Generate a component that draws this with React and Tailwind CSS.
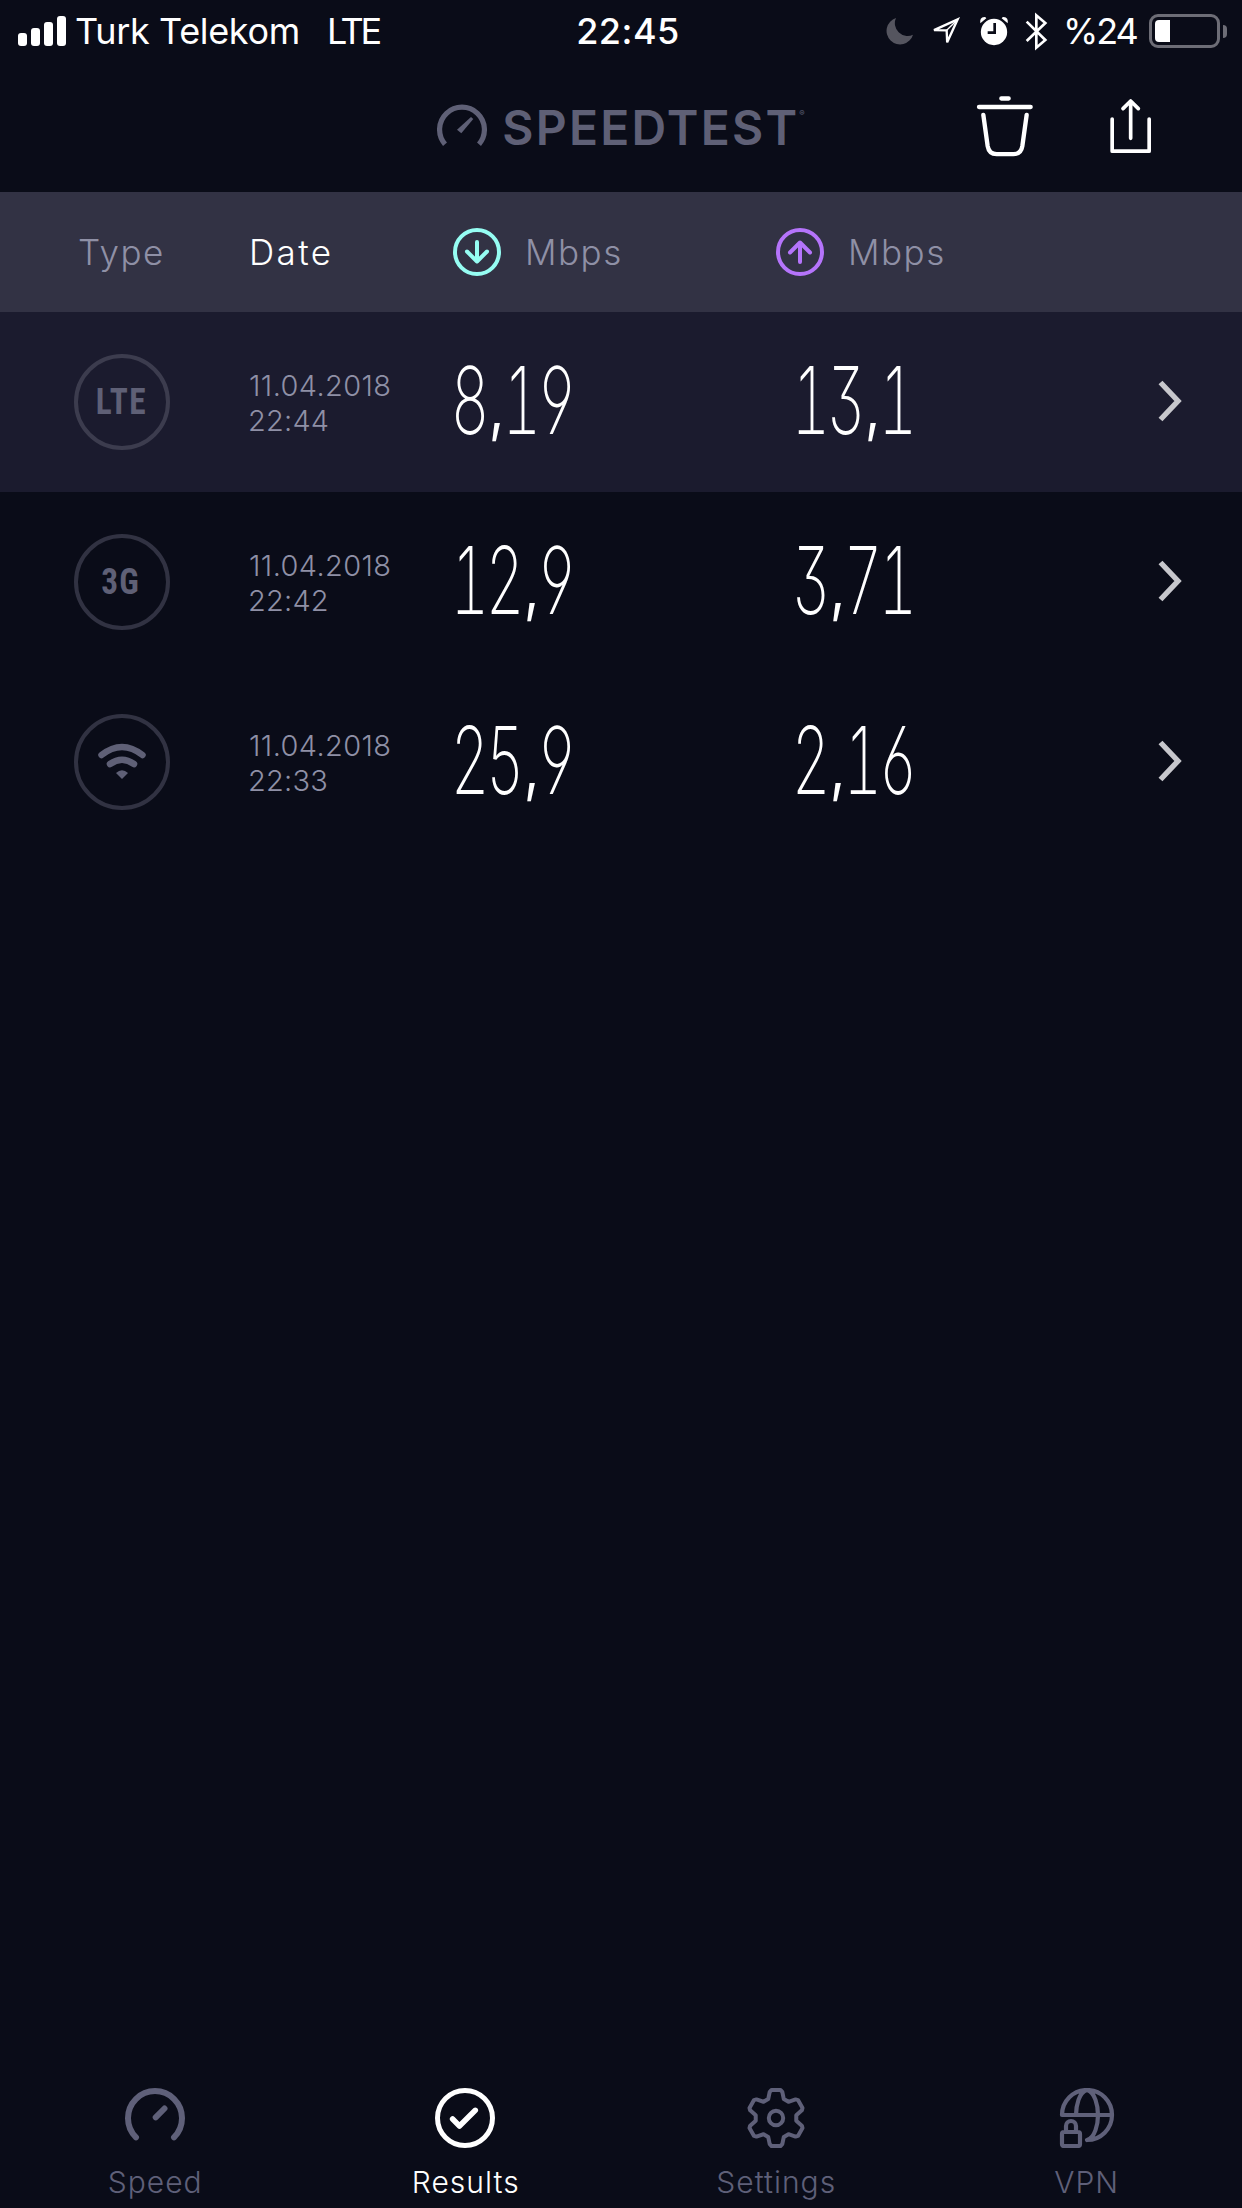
const SignalBars = () => (
  <div className="flex h-[30px] items-end gap-1">
    <span className="h-[13px] w-[9px] rounded-[3px] bg-white" />
    <span className="h-[18px] w-[9px] rounded-[3px] bg-white" />
    <span className="h-6 w-[9px] rounded-[3px] bg-white" />
    <span className="h-[30px] w-[9px] rounded-[3px] bg-white" />
  </div>
);

function StatusBar() {
  return (
    <div className="grid h-[62px] grid-cols-[1fr_auto_1fr] items-center pl-[18px] text-[36px] leading-[62px]">
      <div className="flex items-center">
        <SignalBars />
        <span className="ml-[9px] tracking-[-0.35px]">Turk Telekom</span>
        <span className="ml-[27px] tracking-[-3.2px]">LTE</span>
      </div>
      <span className="font-medium tracking-[0.5px] -translate-x-[2px]">22:45</span>
      <div className="flex items-center justify-end pr-[15px]">
        <svg viewBox="42 45 87 87" className="h-[29px] w-[29px]" fill="#55555f">
          <path d="M75 48 A40.5 40.5 0 1 0 126 98 A38 38 0 0 1 75 48Z" />
        </svg>
        <svg viewBox="180 45 93 93" className="ml-[16px] h-[31px] w-[31px]" fill="none" stroke="#fff" strokeWidth="7">
          <path d="M192 87.500 L263 55 L231.500 124 L230 88Z" />
          <path d="M230 88 L256 62" strokeWidth="4" />
        </svg>
        <svg viewBox="327 45 90 90" className="ml-[18px] h-[30px] w-[30px]" fill="#fff">
          <circle cx="372" cy="93" r="39.500" />
          <path d="M331 67 Q328 49 343 48 Q347 48 349 52Z M413 67 Q416 49 401 48 Q397 48 395 52Z" />
          <path d="M374 66 V95 H353" fill="none" stroke="#0a0c18" strokeWidth="8" />
        </svg>
        <svg viewBox="465 33 69 117" className="ml-[16px] h-[39px] w-[23px]" fill="none" stroke="#fff" strokeWidth="8">
          <path d="M470 62 L526 117 L499 140 V43 L526 66 L470 120" />
        </svg>
        <span className="ml-[15px] w-[86px] whitespace-nowrap tracking-[-2.1px]">%24</span>
        <div className="h-[34px] w-[71px] rounded-[9px] border-[3px] border-[#6d6d76] p-[3px]">
          <div className="h-full w-[15px] rounded-l-[4px] bg-white" />
        </div>
        <div className="ml-[3px] h-[13px] w-1 rounded-r-full bg-[#6d6d76]" />
      </div>
    </div>
  );
}

function NavBar() {
  return (
    <div className="grid h-[130px] grid-cols-[1fr_auto_1fr] items-center">
      <div />
      <div className="flex items-center text-[#5f6076]">
        <svg viewBox="0 0 50 43" className="mt-[-3px] h-[43px] w-[50px]" fill="none" stroke="currentColor" strokeWidth="5.200">
          <path d="M8 40.200 A22.400 22.400 0 1 1 42 40.200" />
          <path d="M20 25.700 L24.300 29.300 L36.300 15 L34 13Z" fill="currentColor" stroke="none" />
        </svg>
        <span className="ml-[15px] mt-[2px] text-[48px] font-semibold leading-[60px] tracking-[2.200px]">SPEEDTEST</span>
        <span className="mt-[-28px] text-[8px] leading-[8px]">®</span>
      </div>
      <div className="flex items-center justify-end gap-[75px] pr-[89px]">
        <svg viewBox="108 44 174 188" className="-mt-[2px] h-[63px] w-[58px]" fill="none" stroke="#fff" strokeWidth="13" strokeLinecap="round" strokeLinejoin="round">
          <path d="M184 54 H206 M117 79.500 H272 M130 103 L143 197 Q147 221 170 221 H220 Q243 221 247 197 L260 103" />
        </svg>
        <svg viewBox="508 54 132 168" className="-mt-[2px] h-[56px] w-[44px]" fill="none" stroke="#fff" strokeWidth="11" strokeLinecap="round" strokeLinejoin="round">
          <path d="M517.500 117 V213.500 H628.500 V117 M573 175 V63 M550 86 L573 63 L596 86" />
        </svg>
      </div>
    </div>
  );
}

const ArrowCircle = ({ up, color }) => (
  <svg viewBox="0 0 48 48" className="h-12 w-12" fill="none" stroke={color} strokeWidth="4" strokeLinecap="round" strokeLinejoin="round">
    <circle cx="24" cy="24" r="22" />
    <path d={up ? 'M24 34 V14.500 M14 24.500 L24 14.500 L34 24.500' : 'M24 14 V33.500 M14 23.500 L24 33.500 L34 23.500'} />
  </svg>
);

function HeaderRow() {
  return (
    <div className="grid h-[120px] grid-cols-[176px_203px_323px_1fr] items-center bg-[#323244] pl-[74px] text-[35px] font-light text-[#8f90a6]">
      <span className="pl-[4px] tracking-[1.500px]">Type</span>
      <span className="-ml-[1px] tracking-[2.400px] text-white">Date</span>
      <div className="flex items-center gap-[24px]">
        <ArrowCircle color="#96fdf3" />
        <span className="tracking-[1.500px]">Mbps</span>
      </div>
      <div className="flex items-center gap-[24px]">
        <ArrowCircle up color="#b574fb" />
        <span className="tracking-[1.500px]">Mbps</span>
      </div>
    </div>
  );
}

const Speed = ({ value }) => (
  <div className="flex pt-[8px] text-[93.500px] font-extralight leading-[100px] [font-feature-settings:'tnum','ss01']">
    {value.split('').map((ch, i) =>
      ch === ',' ? (
        <span key={i} className="flex w-[17px] justify-center font-normal">
          <span className="scale-x-[0.8] text-[66px] leading-[113px] [font-feature-settings:normal]">{ch}</span>
        </span>
      ) : (
        <span key={i} className="flex h-[100px] w-[34.800px] justify-center">
          <span className="scale-x-[0.64]">{ch}</span>
        </span>
      ),
    )}
  </div>
);

const WifiGlyph = () => (
  <svg viewBox="0 0 96 96" className="h-24 w-24 shrink-0" fill="none" stroke="#5f6076" strokeWidth="6.500" strokeLinecap="round">
    <path d="M27.500 41 Q48 25 68.500 41 M36 50 Q48 41.500 60 50" />
    <path d="M42 59 Q48 53.500 54 59 L48 65Z" fill="#5f6076" stroke="none" />
  </svg>
);

function ResultRow({ type, date, time, down, up, selected }) {
  return (
    <div className={`grid h-[180px] grid-cols-[175px_204px_341px_1fr_auto] items-center pl-[74px] pr-[60px] ${selected ? 'bg-[#1b1b2e]' : ''}`}>
      <div className={`-ml-[0.5px] flex h-24 w-24 items-center justify-center rounded-full border-4 ${selected ? 'border-[#3c3c4e]' : 'border-[#313242]'}`}>
        {type === 'wifi' ? (
          <WifiGlyph />
        ) : (
          <span className="-ml-px scale-x-[0.9] font-['Roboto'] text-[37px] font-bold tracking-[1.500px] text-[#5f6076] [font-stretch:75%]">{type}</span>
        )}
      </div>
      <div className="pt-[2px] text-[29px] font-light leading-[35px] text-[#8f90a6]">
        <div className="tracking-[0.400px]">{date}</div>
        <div className="-ml-[1px] tracking-[0.200px]">{time}</div>
      </div>
      <Speed value={down} />
      <Speed value={up} />
      <svg viewBox="0 0 24 42" className="-mt-[2px] h-[42px] w-6" fill="none" stroke="#c7c7cc" strokeWidth="5.400">
        <path d="M2.500 2.500 L20 21 L2.500 39.500" />
      </svg>
    </div>
  );
}

const TOOTH = [[-7.8, -18.9], [-6.3, -26.2], [-4.5, -28], [4.5, -28], [6.3, -26.2], [7.8, -18.9]];
const GEAR = [0, 60, 120, 180, 240, 300]
  .flatMap((deg) => {
    const a = (deg * Math.PI) / 180;
    return TOOTH.map(([x, y]) => `${(30 + x * Math.cos(a) - y * Math.sin(a)).toFixed(2)},${(30 + x * Math.sin(a) + y * Math.cos(a)).toFixed(2)}`);
  })
  .join(' ');

const TABS = [
  {
    label: 'Speed',
    icon: <path strokeWidth="6" d="M11 49.300 A27 27 0 1 1 49 49.300 M30.700 29.300 L39.500 20.500" />,
  },
  {
    label: 'Results',
    active: true,
    icon: (
      <>
        <circle cx="30" cy="30" r="27.500" strokeWidth="5" />
        <path strokeWidth="5.500" d="M17.600 31 L24.500 38 L40.300 22.300" />
      </>
    ),
  },
  {
    label: 'Settings',
    icon: (
      <>
        <polygon points={GEAR} strokeWidth="4" />
        <circle cx="30" cy="30" r="7.200" strokeWidth="4" />
      </>
    ),
  },
  {
    label: 'VPN',
    icon: (
      <path
        strokeWidth="4.200"
        d="M6 27 A25 25 0 1 1 31 52 M6 27 H56 M31 2 C23 4 20 18 20 27 M31 2 C39 4 42 18 42 27 C42 36 39 50 31 52 M8 44 H22 Q24 44 24 46 V56 Q24 58 22 58 H8 Q6 58 6 56 V46 Q6 44 8 44 M10 43 V38 A5 5 0 0 1 20 38 V43"
      />
    ),
  },
];

function TabBar() {
  return (
    <div className="grid h-[120px] grid-cols-4">
      {TABS.map(({ label, icon, active }) => (
        <div key={label} className={`flex flex-col items-center ${active ? 'text-white' : 'text-[#5f6079]'}`}>
          <svg viewBox="0 0 60 60" className="-ml-px h-[60px] w-[60px]" fill="none" stroke="currentColor" strokeLinecap="round" strokeLinejoin="round">
            {icon}
          </svg>
          <span className="mt-[14px] text-[30px] font-light leading-[40px] tracking-[1px]">{label}</span>
        </div>
      ))}
    </div>
  );
}

const RESULTS = [
  { type: 'LTE', date: '11.04.2018', time: '22:44', down: '8,19', up: '13,1', selected: true },
  { type: '3G', date: '11.04.2018', time: '22:42', down: '12,9', up: '3,71' },
  { type: 'wifi', date: '11.04.2018', time: '22:33', down: '25,9', up: '2,16' },
];

export default function App() {
  return (
    <div className="flex h-[2208px] w-[1242px] flex-col overflow-hidden bg-[#0a0c18] font-['Inter',sans-serif] text-white">
      <StatusBar />
      <NavBar />
      <HeaderRow />
      <main className="flex-1">
        {RESULTS.map((r) => (
          <ResultRow key={r.time} {...r} />
        ))}
      </main>
      <TabBar />
    </div>
  );
}
